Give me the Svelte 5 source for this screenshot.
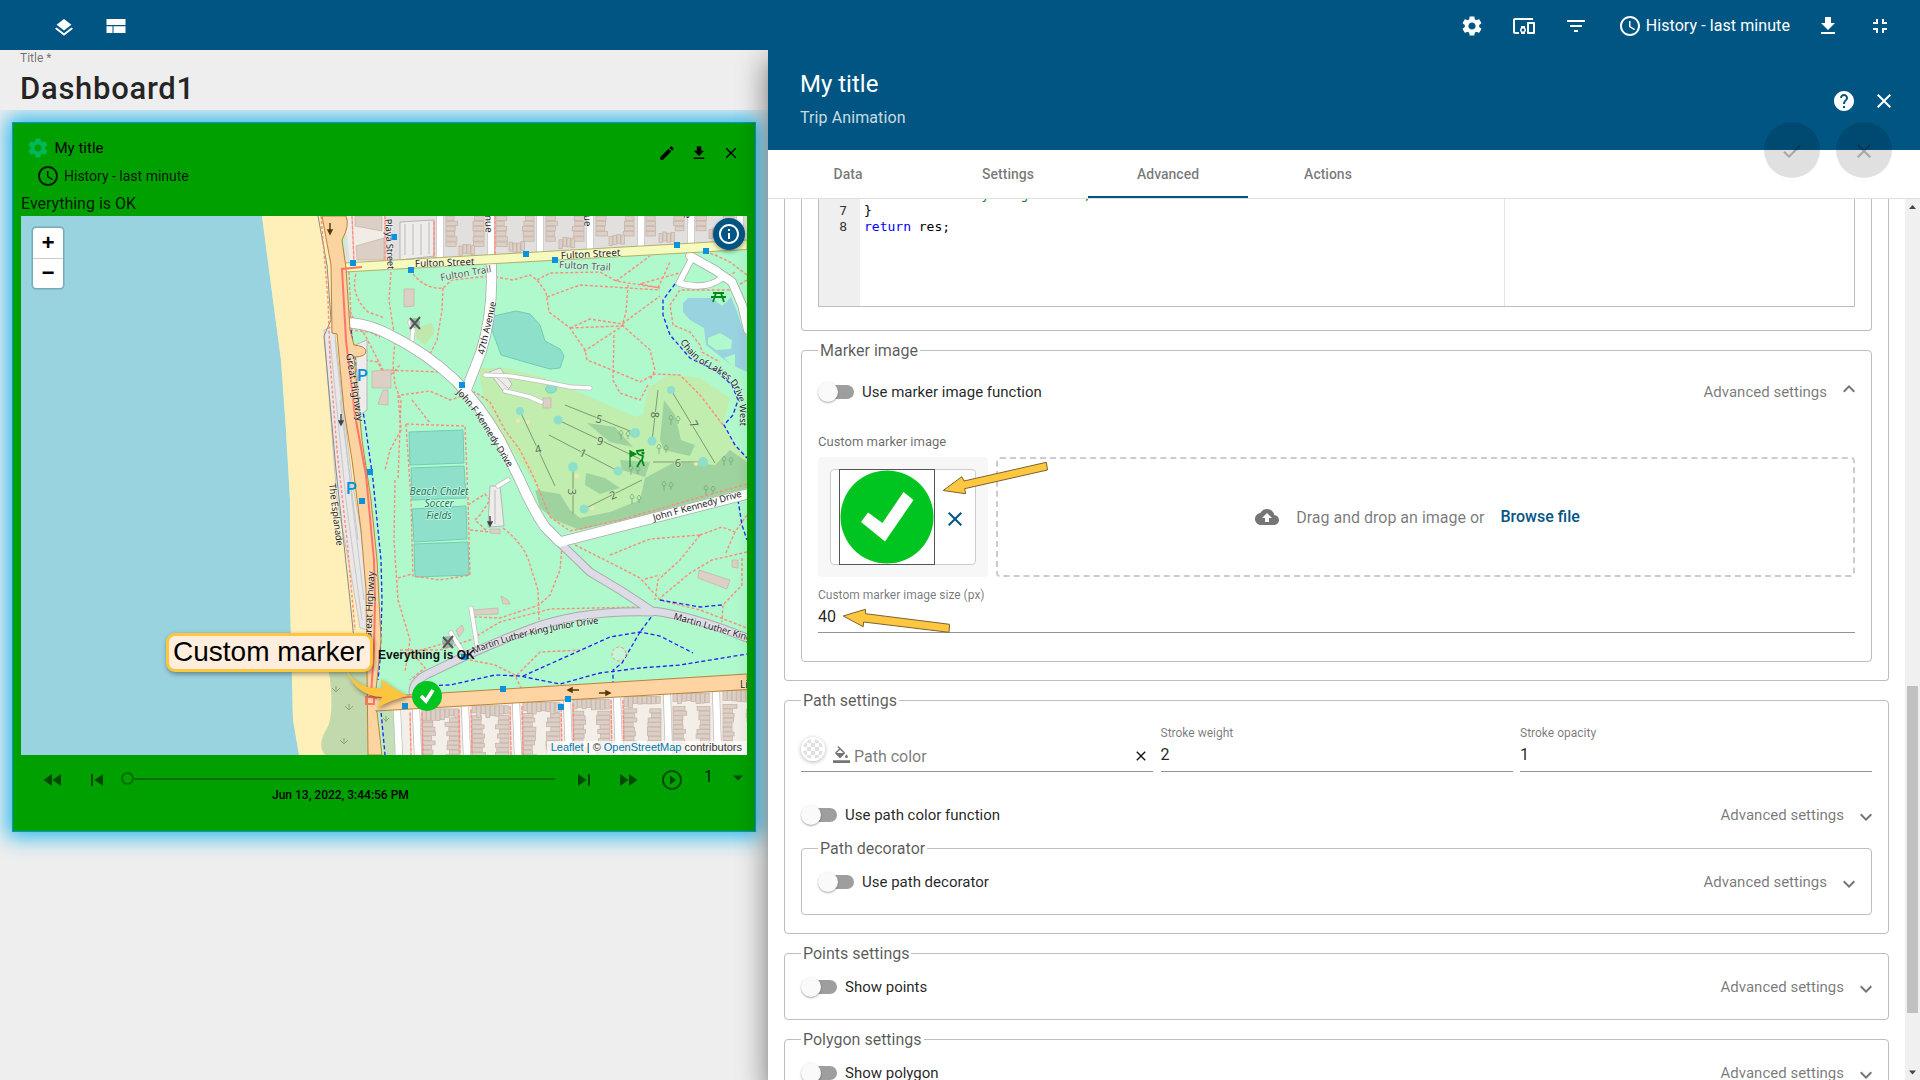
<script>
  const icons = {
    layers: 'M12 16.5l-7.4-5.7L12 5l7.4 5.8zM12 19.2l7.4-5.8 1.6 1.3-9 7-9-7 1.6-1.3z',
    gear: 'M19.14 12.94c.04-.3.06-.61.06-.94 0-.32-.02-.64-.07-.94l2.03-1.58c.18-.14.23-.41.12-.61l-1.92-3.32c-.12-.22-.37-.29-.59-.22l-2.39.96c-.5-.38-1.03-.7-1.62-.94l-.36-2.54c-.04-.24-.24-.41-.48-.41h-3.84c-.24 0-.43.17-.47.41l-.36 2.54c-.59.24-1.13.57-1.62.94l-2.39-.96c-.22-.08-.47 0-.59.22L2.74 8.87c-.12.21-.08.47.12.61l2.03 1.58c-.05.3-.09.63-.09.94s.02.64.07.94l-2.03 1.58c-.18.14-.23.41-.12.61l1.92 3.32c.12.22.37.29.59.22l2.39-.96c.5.38 1.03.7 1.62.94l.36 2.54c.05.24.24.41.48.41h3.84c.24 0 .44-.17.47-.41l.36-2.54c.59-.24 1.13-.56 1.62-.94l2.39.96c.22.08.47 0 .59-.22l1.92-3.32c.12-.22.07-.47-.12-.61l-2.01-1.58zM12 15.6c-1.98 0-3.6-1.62-3.6-3.6s1.62-3.6 3.6-3.6 3.6 1.62 3.6 3.6-1.62 3.6-3.6 3.6z',
    devices: 'M3 6h18V4H3c-1.1 0-2 .9-2 2v12c0 1.1.9 2 2 2h4v-2H3V6zm10 6H9v1.78c-.61.55-1 1.33-1 2.22s.39 1.67 1 2.22V20h4v-1.78c.61-.55 1-1.34 1-2.22s-.39-1.67-1-2.22V12zm-2 5.5c-.83 0-1.5-.67-1.5-1.5s.67-1.5 1.5-1.5 1.5.67 1.5 1.5-.67 1.5-1.5 1.5zM22 8h-6c-.5 0-1 .5-1 1v10c0 .5.5 1 1 1h6c.5 0 1-.5 1-1V9c0-.5-.5-1-1-1zm-1 10h-4v-8h4v8z',
    filter: 'M10 18h4v-2h-4v2zM3 6v2h18V6H3zm3 7h12v-2H6v2z',
    clock: 'M11.99 2C6.47 2 2 6.48 2 12s4.47 10 9.99 10C17.52 22 22 17.52 22 12S17.52 2 11.99 2zM12 20c-4.42 0-8-3.58-8-8s3.58-8 8-8 8 3.58 8 8-3.58 8-8 8zm.5-13H11v6l5.25 3.15.75-1.23-4.5-2.67z',
    download: 'M19 9h-4V3H9v6H5l7 7 7-7zM5 18v2h14v-2H5z',
    exit: 'M5 16h3v3h2v-5H5v2zm3-8H5v2h5V5H8v3zm6 11h2v-3h3v-2h-5v5zm2-11V5h-2v5h5V8h-3z',
    help: 'M12 2C6.48 2 2 6.48 2 12s4.48 10 10 10 10-4.48 10-10S17.52 2 12 2zm1 17h-2v-2h2v2zm2.07-7.75l-.9.92C13.45 12.9 13 13.5 13 15h-2v-.5c0-1.1.45-2.1 1.17-2.83l1.24-1.26c.37-.36.59-.86.59-1.41 0-1.1-.9-2-2-2s-2 .9-2 2H8c0-2.21 1.79-4 4-4s4 1.79 4 4c0 .88-.36 1.68-.93 2.25z',
    close: 'M19 6.41L17.59 5 12 10.59 6.41 5 5 6.41 10.59 12 5 17.59 6.41 19 12 13.41 17.59 19 19 17.59 13.41 12z',
    check: 'M9 16.17L4.83 12l-1.42 1.41L9 19 21 7l-1.41-1.41z',
    edit: 'M3 17.25V21h3.75L17.81 9.94l-3.75-3.75L3 17.25zM20.71 7.04c.39-.39.39-1.02 0-1.41l-2.34-2.34c-.39-.39-1.02-.39-1.41 0l-1.83 1.83 3.75 3.75 1.83-1.83z',
    rewind: 'M11 18V6l-8.5 6 8.5 6zm.5-6l8.5 6V6l-8.5 6z',
    forward: 'M4 18l8.5-6L4 6v12zm9-12v12l8.5-6L13 6z',
    prev: 'M6 6h2v12H6zm3.5 6l8.5 6V6z',
    next: 'M6 18l8.5-6L6 6v12zM16 6v12h2V6h-2z',
    play: 'M10 16.5l6-4.5-6-4.5v9zM12 2C6.48 2 2 6.48 2 12s4.48 10 10 10 10-4.48 10-10S17.52 2 12 2zm0 18c-4.41 0-8-3.59-8-8s3.59-8 8-8 8 3.59 8 8-3.59 8-8 8z',
    caret: 'M7 9.5l5 5 5-5z',
    info: 'M11 7h2v2h-2zm0 4h2v6h-2zm1-9C6.48 2 2 6.48 2 12s4.48 10 10 10 10-4.48 10-10S17.52 2 12 2zm0 18c-4.41 0-8-3.59-8-8s3.59-8 8-8 8 3.59 8 8-3.59 8-8 8z',
    cloud: 'M19.35 10.04C18.67 6.59 15.64 4 12 4 9.11 4 6.6 5.64 5.35 8.04 2.34 8.36 0 10.91 0 14c0 3.31 2.69 6 6 6h13c2.76 0 5-2.24 5-5 0-2.64-2.05-4.78-4.65-4.96zM14 13v4h-4v-4H7l5-5 5 5h-3z',
    fill: 'M16.56 8.94L7.62 0 6.21 1.41l2.38 2.38-5.15 5.15c-.59.59-.59 1.54 0 2.12l5.5 5.5c.29.29.68.44 1.06.44s.77-.15 1.06-.44l5.5-5.5c.59-.58.59-1.53 0-2.12zM5.21 10L10 5.21 14.79 10H5.21zM19 11.5s-2 2.17-2 3.5c0 1.1.9 2 2 2s2-.9 2-2c0-1.33-2-3.5-2-3.5zM0 20h24v4H0v-4z',
    chevron: 'M7.41 8.59L12 13.17l4.59-4.58L18 10l-6 6-6-6z'
  };
  const tabs = ['Data', 'Settings', 'Advanced', 'Actions'];

  // Rows of houses on either side of the avenues.
  let seed = 7;
  const rnd = () => (seed = (seed * 16807) % 2147483647) / 2147483647;
  const north = [];
  for (const x of [446, 496, 546, 596, 646, 696]) {
    for (const side of [0, 1]) {
      const bottom = 264 - (x - 380) * 0.066 - side * 2 - 10;
      for (let y = 216; y < bottom - 4; y += 5.2) {
        const w = 8 + rnd() * 4;
        north.push([side ? x + 38 - w : x, y, w, 4.4]);
      }
    }
    for (let i = 0; i < 4; i++) north.push([x + 13 + i * 4, 244 - (x - 440) * 0.065 + rnd() * 3, 3.6, 9]);
  }
  const south = [];
  for (const x of [422, 472, 523, 573, 624, 673, 723]) {
    for (const side of [0, 1]) {
      for (let y = 718 - (x - 420) * 0.045; y < 755; y += 4.6) {
        const w = 9 + rnd() * 5;
        south.push([side ? x + 37 - w : x, y, w, 4]);
      }
    }
    for (let i = 0; i < 8; i++) south.push([x + i * 4.6, 709 - (x - 420) * 0.062, 4, 7 + rnd() * 5]);
  }
  const stops = [[353, 263], [394, 237], [411, 270], [526, 254], [555, 260], [677, 245], [706, 251], [462, 385], [370, 472], [362, 501], [464, 657], [503, 689], [568, 699], [561, 707], [405, 706]];
  const streetsN = [440, 491, 540, 590, 641, 691, 740];
  const streetsS = [397, 416, 465, 516, 567, 617, 667, 716];
  const greens = [[520, 411, 4], [558, 420, 4.5], [573, 467, 5], [618, 471, 4.5], [635, 433, 5], [652, 441, 4.5], [671, 390, 4], [703, 462, 5], [584, 509, 4.5]];
  const holes = [[520, 411, 555, 486], [558, 420, 640, 459], [549, 435, 618, 471], [565, 405, 635, 433], [658, 390, 652, 441], [671, 390, 715, 463], [653, 462, 703, 462], [573, 467, 573, 514], [584, 509, 642, 480]];
  const numbers = [['4', 538, 449, -15], ['9', 600, 441, 15], ['1', 583, 453, 25], ['5', 599, 419, 15], ['8', 655, 415, 90], ['7', 694, 424, 60], ['6', 678, 463, 0], ['3', 572, 492, 90], ['2', 613, 495, -25]];
  const trees = [[674, 420], [662, 449], [634, 470], [667, 486], [709, 490], [727, 461], [624, 435], [635, 499]];
  const jfk = 'M352 323Q372 325 390 335 425 352 455 380 480 405 500 440L519 478Q532 508 545 527L560 542 747 494M491 262Q494 310 481 352L467 388';
  const paths = [
    'M349 272 352 340 350 310M356 274Q350 295 368 312L385 318M391 272 389 300 395 340 393 365 395 385 401 400 398 480M410 270Q424 290 443 288L452 280 490 276 513 280 530 275 537 280 546 292 549 312 570 328 585 350 587 360 612 370 640 382 655 374 680 375 700 395 723 425',
    'M443 288 442 310 437 340 430 354M352 316 365 335 383 370 440 372 420 350M350 358 378 362 386 380 400 365',
    'M537 280 550 273 600 272 616 281 660 288 640 284 690 270M616 281 650 256M658 288 670 262M547 297 580 285 660 290M628 285 626 312 622 326 570 328M570 328 590 319 622 324 660 296M624 325 583 352M622 325 650 350 655 370 650 380M614 335 613 380 620 393 640 400 648 385',
    'M350 330 370 332 380 337M401 395 430 391 450 400 475 392 490 402 505 430 520 450 535 480 550 517 570 531 620 520 747 484',
    'M406 424 465 426 468 500 470 575 440 580 413 576 411 500ZM398 395 401 430 390 450 385 470M412 400 430 423M395 480 394 540 398 600 410 640 405 672M398 578 412 574',
    'M468 505 485 494 490 500 480 515 475 520 486 530M470 530 490 532M503 528Q525 545 530 565L538 590 539 620M400 650 440 650 470 640 500 622 550 609 640 607M562 546 560 570 550 595 539 605 500 618 475 617',
    'M575 545 605 560 640 578 660 600 700 610 747 628M610 555 650 539 700 535M700 535 680 560 658 580 655 600M700 535 722 527 735 532 747 515M735 532 725 555M747 552 712 560 690 573 660 598M742 558 742 585 723 605 722 622M645 579 660 575',
    'M470 660 495 665 515 675 522 690 519 700M517 675 540 652 583 650M414 655 425 668 410 680M455 640 405 655'
  ];
  const eastPaths = 'M747 275 730 262 715 255 700 250M747 280 730 290 700 290 680 290 670 305 673 325 690 332 700 345 702 352 720 362M735 272 722 280';
  const bluePaths = [
    'M675 284 663 300 663 315 670 335 690 358 715 370 732 385 738 400 733 415 724 425 735 445 747 458',
    'M351 330 357 370 362 405 366 430 373 480 381 560 382 600 380 660 378 680',
    'M380 700 385 755M413 686 450 685 495 675 520 676 560 684 600 673 640 668 680 665 747 654M523 676 570 655 610 637 640 632 660 636 693 653M640 632 622 663 613 670 613 684M655 612 640 632M660 600 700 607 722 605M738 500 742 525 747 540'
  ];
</script>

{#snippet icon(name, size = 24)}
  <svg class="icon" width={size} height={size} viewBox="0 0 24 24"><path d={icons[name]} /></svg>
{/snippet}

{#snippet toggleRow(label, open = false)}
  <div class="toggle-row">
    <span class="toggle"><i></i></span>
    <span class="toggle-label">{label}</span>
    <span class="adv">Advanced settings</span>
    <span class="chev" class:open>{@render icon('chevron', 24)}</span>
  </div>
{/snippet}

<div class="app">
  <header class="topbar">
    <div class="left-tools">
      {@render icon('layers')}
      <svg class="icon" width="24" height="24" viewBox="0 0 24 24"><path d="M2.500 5H21.500v6H2.500zM2.500 12.300h6V19h-6zM9.500 12.300h12V19h-12z" /></svg>
    </div>
    <div class="right-tools">
      {@render icon('gear')}
      {@render icon('devices')}
      {@render icon('filter')}
      <span class="history">{@render icon('clock')}<span>History - last minute</span></span>
      {@render icon('download')}
      {@render icon('exit')}
    </div>
  </header>

  <div class="body">
    <main class="dashboard">
      <div class="dash-title">
        <small>Title *</small>
        <strong>Dashboard1</strong>
      </div>
      <div class="canvas">
        <section class="widget">
          <div class="w-head">
            <div>
              <div class="w-title">{@render icon('gear', 24)}<span>My title</span></div>
              <div class="w-time">{@render icon('clock', 24)}<span>History - last minute</span></div>
            </div>
            <div class="w-actions">
              {@render icon('edit', 18)}{@render icon('download', 18)}{@render icon('close', 18)}
            </div>
          </div>
          <div class="status">Everything is OK</div>
          <div class="map">
            <svg width="726" height="539" viewBox="21 216 726 539">
              <defs>
                <path id="jfk1" d="M456 393Q470 406 484 429T522 490" />
                <path id="mlk1" d="M474 654Q530 629 640 619" />
                <path id="lakes" d="M680 342Q693 362 712 370T737 395 737 450" />
              </defs>
              <rect x="21" y="216" width="726" height="539" fill="#aff9cc" />
              <path d="M21 216H262L273 300 281 360 286 430 290 500 290 600 293 720 299 755H21Z" fill="#99d3df" />
              <path d="M262 216H330L346 400 372 600V755H299L293 720 290 600 290 500 286 430 281 360 273 300Z" fill="#fff0ba" />
              <path d="M326 660H372V755H325Q317 745 326 730 333 720 331 690 329 668 326 660Z" fill="#c2d8ad" />
              <path d="M345 216H747V244L345 268Z" fill="#e2dfdf" />
              <path d="M345 216H384V262L350 264Z" fill="#f2ece6" />
              <path d="M392 705 747 688V755H397Z" fill="#f3eee8" />
              <path d="M378 705H392L397 755H384Z" fill="#c2e0b8" />
              <path d="M478 368 505 368 545 378 585 395 636 417 643 414 648 388 670 374 700 378 730 398 723 425 735 445 747 458V488L620 520 575 531 553 520 530 476 500 432 484 400Z" fill="#c1edae" />
              <path d="M664 400 675 415 681 440 695 445 690 456 664 450 660 440ZM587 423 615 427 633 447 610 442ZM645 478 675 462 715 465 730 450 747 462V488L640 516 580 530 555 520 540 508 535 490 560 494 570 510 580 518 610 512 640 500ZM586 473 605 478 620 488 600 494 585 485ZM620 460 650 462 645 477 622 470Z" fill="#9ed29e" />
              <path d="M494 316 516 311 530 314 540 325 545 341 560 349 564 356 560 368 550 369 525 362 501 355 492 330Z" fill="#8fe0ca" stroke="#6fcdb4" />
              <path d="M683 303 688 298 712 298 722 306 731 297 737 312 743 330 747 336V372L730 364 706 345 704 328 690 320 683 312Z" fill="#99d3df" />
              <path d="M708 338 720 333 732 340 731 349 716 350 708 344ZM724 358 735 354 735 368Z" fill="#aff9cc" />
              <g fill="#8fe0ca" stroke="#6fcdb4">
                <path d="M409 432 463 430 464 463 410 465ZM411 468 464 466 466 498 412 500ZM412 509 466 506 467 539 414 542ZM414 544 468 542 469 575 415 577Z" />
              </g>
              <ellipse cx="551" cy="389" rx="5.500" ry="4.200" fill="#8fe0ca" stroke="#6fcdb4" stroke-width=".7" />
              <path d="M324 330 334 326 352 480 366 560 368 630 360 628 352 580 337 500Z" fill="#e9e7e7" stroke="#b5b5b5" stroke-width=".7" />
              <path d="M330 340 346 500 362 620M335 340 352 500 364 600M340 400 358 540" stroke="#c8c8c8" fill="none" />
              <path d="M318 216 327 265 331 320 324 336 336 470 350 600 354 640" stroke="#888" fill="none" stroke-width="1" />
              <path d="M321 216 328 300 330 360 337 450 347 540 355 630" class="foot" />

              <g class="foot">{#each paths as d}<path {d} />{/each}<path d={eastPaths} /></g>
              <g class="cycle">{#each bluePaths as d}<path {d} />{/each}</g>

              <g fill="#dccfc6" stroke="#c4b1a5" stroke-width=".7">
                <path d="M355 216 382 216V231L355 226ZM356 246 384 238V260L357 260ZM404 289 414 289V306L404 307ZM372 371 391 370V388L372 388ZM383 390 388 390V405L378 404ZM699 570 730 580 727 589 698 578ZM732 560 738 560V568L732 567ZM501 596 508 600 510 604 503 604ZM473 610 498 608V614L473 615ZM543 398 551 398V408L543 408ZM490 529 500 529V534L490 533ZM456 630 462 625 464 630 459 637Z" />
                {#each north as [x, y, w, h]}<rect {x} {y} width={w} height={h} />{/each}
                {#each south as [x, y, w, h]}<rect {x} {y} width={w} height={h} />{/each}
              </g>
              <path d="M400 222 434 220V256L400 260ZM489 372 500 368 512 384 505 394ZM490 486 500 486 504 526 488 527ZM355 345 367 340V410L360 415Z" fill="#eeeceb" stroke="#aaa" stroke-width=".8" />
              <path d="M405 224V255M413 224V255M421 224V255M429 222V254M495 490V524M495 376 508 388" stroke="#bbb" fill="none" />

              <g fill="none" stroke-linejoin="round" stroke-linecap="round">
                <g stroke="#bbb" stroke-width="8">
                  {#each streetsN as x}<path d={`M${x} 216V${262 - (x - 380) * 0.064}`} />{/each}
                  {#each streetsS as x}<path d={`M${x} ${712 - (x - 400) * 0.062}L${x + 2} 756`} />{/each}
                </g>
                <g stroke="#fff" stroke-width="6.6">
                  {#each streetsN as x}<path d={`M${x} 216V${264 - (x - 380) * 0.064}`} />{/each}
                  {#each streetsS as x}<path d={`M${x} ${710 - (x - 400) * 0.062}L${x + 2} 756`} />{/each}
                </g>
                <g class="foot">
                  <path d="M352 216 354 262M434 222V258M495 216V256M385 216V262" />
                  {#each streetsS.slice(1, 6) as x}<path d={`M${x - 6} ${714 - (x - 400) * 0.062}L${x - 5} 755M${x + 6} ${714 - (x - 400) * 0.062}L${x + 7} 755`} />{/each}
                </g>
                <g stroke="#c0c0c0" stroke-width="5"><path d="M485 375 510 376 540 381 570 387 590 388M505 391 530 397 541 402M412 340 413 330 410 322M471 608 477 645M451 633 463 652M508 480 498 486" /></g>
                <g stroke="#fff" stroke-width="3.6"><path d="M485 375 510 376 540 381 570 387 590 388M505 391 530 397 541 402M412 340 413 330 410 322M471 608 477 645M451 633 463 652M508 480 498 486" /></g>
                <g stroke="#aaa">
                  <path stroke-width="11" d={jfk} />
                  <path stroke-width="9" d="M562 545 590 572 620 590 652 611Q690 615 747 638M652 612Q580 610 530 629T432 672Q413 680 413 692" />
                  <path stroke-width="9.500" d="M690 256 715 270 732 282 742 305 748 330" />
                  <path stroke-width="7" d="M691 260 679 283Q705 291 722 278" />
                </g>
                <g stroke="#dddbe6" stroke-width="7"><path d="M562 545 590 572 620 590 652 611Q690 615 747 638M652 612Q580 610 530 629T432 672Q413 680 413 692" /></g>
                <g stroke="#fff">
                  <path stroke-width="9.500" d={jfk} />
                  <path stroke-width="8" d="M690 256 715 270 732 282 742 305 748 330" />
                  <path stroke-width="5.500" d="M691 260 679 283Q705 291 722 278" />
                </g>
              </g>

              <path d="M344 263 747 240V249.500L344 272Z" fill="#f7fabf" stroke="#a4a04c" stroke-width=".8" />
              <path d="M322 216 331 265 332 333 337 334 344 410 352 460 361 530 366 590 368 755H382L377 712 376 690 381 640 377 560 371 500 362 440 354 357Q366 357 366 351 365 346 354 345L350 330 346 268 342 240Q350 225 346 216Z" fill="#fcd4a1" stroke="#b98437" />
              <path d="M376 697 747 674V689.500L376 711Z" fill="#fed5a2" stroke="#b98437" />
              <path d="M369 699H378V710H369Z" fill="#fcd4a1" />
              <path d="M362 267 342 269 346 340 355 415 366 475 374 560 375 600 374 650 371 695V697H430M366 697H374V704H366Z" fill="none" stroke="#ff7468" stroke-width="2" />

              <g stroke="#7d9a76" stroke-width="1">{#each holes as [a, b, c, d]}<line x1={a} y1={b} x2={c} y2={d} />{/each}</g>
              <g fill="#8fe0ca">{#each greens as [x, y, r]}<circle cx={x} cy={y} {r} />{/each}</g>
              <g fill="#f5e3b5"><circle cx="518" cy="421" r="2" /><circle cx="528" cy="422" r="2" /><circle cx="577" cy="476" r="2" /><circle cx="696" cy="464" r="2" /><circle cx="592" cy="508" r="2" /></g>
              <g class="num">{#each numbers as [n, x, y, a]}<text transform={`translate(${x} ${y}) rotate(${a})`} y="4">{n}</text>{/each}</g>
              <g fill="none" stroke="#74aa78" opacity=".8">{#each trees as [x, y]}<path d={`M${x - 3} ${y + 5}V${y - 1}M${x - 3} ${y - 5}q-4 4 0 5 4-1 0-5M${x + 4} ${y + 4}V${y}M${x + 4} ${y - 4}q-4 4 0 5 4-1 0-5`} />{/each}</g>
              <path d="M415 328 432 323 435 332 425 345 416 338Z" fill="#c1e8ac" />
              <g fill="#888" opacity=".55"><circle cx="415" cy="323" r="5" /><circle cx="448" cy="642" r="6" /></g>
              <g stroke="#555" stroke-width="2" fill="none"><path d="M410 318 420 329M420 317 410 329M443 637 453 648M453 636 443 648" /></g>
              <g fill="none" stroke="#008a1c" stroke-width="1.8"><path d="M713 293H724M711 297H726M716 293 713 302M721 293 724 302" /></g>
              <path d="M630 450V467M630 451 636 454 630 457" fill="#008a1c" stroke="#008a1c" stroke-width="1.200" />
              <path d="M638 454 643 456 642 460 644 466M641 460 637 467M638 454 637 451 644 450" fill="none" stroke="#008a1c" stroke-width="1.8" />
              <circle cx="643" cy="453" r="1.6" fill="#008a1c" />
              <g stroke="#8ba877" fill="none"><path d="M336 686V692M332 688 336 692 340 688M349 704V710M345 706 349 710 353 706M344 738V744M340 740 344 744 348 740M386 716V722M383 718 386 721 389 718" /></g>
              <g stroke="#523509" stroke-width="1.4" fill="#523509">
                <path d="M330 223V234M328 230H332L330 234Z" /><path d="M341 414V425M339 421H343L341 425Z" stroke="#444" />
                <path d="M490 516V526M488 522H492L490 526Z" stroke="#444" /><path d="M568 690H579M572 688V692L568 690ZM599 693H610M606 691V695L610 693Z" />
              </g>

              <g fill="#0a92dd">{#each stops as [x, y]}<rect x={x - 3} y={y - 3} width="6" height="6" />{/each}</g>
              <g class="parking"><text x="357" y="381">P</text><text x="346" y="494">P</text></g>

              <g class="road">
                <text x="415" y="267" transform="rotate(-2 416 266)">Fulton Street</text>
                <text x="561" y="259" transform="rotate(-3 561 258)">Fulton Street</text>
                <text x="441" y="281" class="trail" transform="rotate(-10 441 281)">Fulton Trail</text>
                <text x="559" y="268" class="trail" transform="rotate(3 559 269)">Fulton Trail</text>
                <text transform="translate(385 219) rotate(87)" class="narrow">Playa Street</text>
                <text transform="translate(485 215) rotate(88)">nue</text>
                <text transform="translate(584 215) rotate(88)">ue</text>
                <text transform="translate(684 213) rotate(88)">e</text>
                <text class="narrow"><textPath href="#jfk1">John F Kennedy Drive</textPath></text>
                <text class="narrow long"><textPath href="#mlk1">Martin Luther King Junior Drive</textPath></text>
                <text class="narrow"><textPath href="#lakes">Chain of Lakes Drive West</textPath></text>
                <text class="narrow" transform="translate(654 521) rotate(-15.500)">John F Kennedy Drive</text>
                <text class="narrow" transform="translate(484 355) rotate(-77)">47th Avenue</text>
                <text class="narrow" transform="translate(673 619) rotate(16)">Martin Luther King</text>
                <text transform="translate(346 354) rotate(81)">Great Highway</text>
                <text transform="translate(371 640) rotate(-87)">Great Highway</text>
                <text class="narrow" transform="translate(329 484) rotate(83)">The Esplanade</text>
                <text x="740" y="688">Li</text>
              </g>
              <g class="field"><text x="439" y="495">Beach Chalet</text><text x="439" y="507">Soccer</text><text x="439" y="519">Fields</text></g>
              <circle cx="619" cy="654" r="7" fill="#c3f5d6" stroke="#ff8c7a" stroke-dasharray="3 2" />
              <text class="tip" x="378" y="659">Everything is OK</text>
              <circle cx="427" cy="696" r="15" fill="#00c520" />
              <path d="M421 696 426 701 433 690" fill="none" stroke="#fff" stroke-width="3.8" />
            </svg>
            <div class="zoomctl"><b>+</b><b>−</b></div>
            <div class="infobtn">{@render icon('info', 24)}</div>
            <div class="attrib"><a>Leaflet</a> | © <a>OpenStreetMap</a> contributors</div>
          </div>
          <div class="player">
            <div class="controls">
              {@render icon('rewind', 24)}
              {@render icon('prev', 24)}
              <div class="slider"><i></i><u></u></div>
              {@render icon('next', 24)}
              {@render icon('forward', 24)}
              {@render icon('play', 24)}
              <span class="speed">1</span>
              {@render icon('caret', 24)}
            </div>
            <div class="stamp">Jun 13, 2022, 3:44:56 PM</div>
          </div>
        </section>
      </div>
      <div class="callout">Custom marker</div>
      <svg class="callout-arrow" width="70" height="50" viewBox="344 668 70 50">
        <path d="M347 672Q360 690 382 688L381 679Q396 690 408 696 393 699 377 708L382 697Q357 696 347 672Z" />
      </svg>
    </main>

    <aside class="panel">
      <div class="p-head">
        <div>
          <div class="p-title">My title</div>
          <div class="p-sub">Trip Animation</div>
        </div>
        <div class="p-icons">{@render icon('help')}{@render icon('close')}</div>
        <div class="fabs">
          <span>{@render icon('check')}</span>
          <span>{@render icon('close')}</span>
        </div>
      </div>
      <nav>
        {#each tabs as t}<span class:active={t === 'Advanced'}>{t}</span>{/each}
      </nav>
      <div class="scroll">
        <div class="content">
          <div class="group cut outer">
            <div class="group cut first">
              <div class="editor">
                <div class="gutter"><span>6</span><span>7</span><span>8</span></div>
                <pre><span class="str">    res = "Everything is OK";</span>
{'}'}
<span class="kw">return</span> res;</pre>
              </div>
            </div>
            <div class="group marker">
              <div class="legend">Marker image</div>
              {@render toggleRow('Use marker image function', true)}
              <div class="img-label">Custom marker image</div>
              <div class="upload">
                <div class="thumbbox">
                  <div class="thumb">
                    <svg width="96" height="96" viewBox="0 0 96 96"><rect x=".5" y=".5" width="95" height="95" fill="#fff" stroke="#555" /><circle cx="48" cy="48" r="46.500" fill="#00c520" /><path d="M22 53 29 43.500 43.500 54 64.500 23 74.500 31 46 72.500Z" fill="#fff" /></svg>
                    {@render icon('close', 24)}
                  </div>
                </div>
                <div class="drop">{@render icon('cloud', 24)}<span>Drag and drop an image or</span><b>Browse file</b></div>
              </div>
              <div class="field-box size"><small>Custom marker image size (px)</small><span>40</span></div>
            </div>
          </div>

          <div class="group path">
            <div class="legend">Path settings</div>
            <div class="fields">
              <div class="field-box color">
                <i class="swatch"></i>{@render icon('fill', 17)}<em>Path color</em>{@render icon('close', 16)}
              </div>
              <div class="field-box"><small>Stroke weight</small><span>2</span></div>
              <div class="field-box"><small>Stroke opacity</small><span>1</span></div>
            </div>
            {@render toggleRow('Use path color function')}
            <div class="group deco">
              <div class="legend">Path decorator</div>
              {@render toggleRow('Use path decorator')}
            </div>
          </div>

          <div class="group simple">
            <div class="legend">Points settings</div>
            {@render toggleRow('Show points')}
          </div>
          <div class="group simple">
            <div class="legend">Polygon settings</div>
            {@render toggleRow('Show polygon')}
          </div>
        </div>
        <div class="scrollbar">
          <svg width="15" height="15" viewBox="0 0 15 15"><path d="M4 10 7.500 6 11 10Z" /></svg>
          <i></i>
          <svg width="15" height="15" viewBox="0 0 15 15"><path d="M4 5.500 7.500 9.500 11 5.500Z" /></svg>
        </div>
      </div>
      <svg class="pointers" width="240" height="190" viewBox="840 455 240 190">
        <path d="M943.200 490.500 961.800 476.700 964 481 1046.400 462.300 1047.500 470 964.600 488.700 965.700 493.700Z" />
        <path d="M843.200 616 865.400 609.300V613.700L949.600 624.300 949 632.300 863.600 622 863.200 626.700Z" />
      </svg>
    </aside>
  </div>
</div>

<style>
  :global(body) { margin: 0; overflow: hidden; }
  .app { width: 1920px; height: 1080px; display: flex; flex-direction: column; font-family: Roboto, sans-serif; background: #eee; color: rgba(0, 0, 0, .87); overflow: hidden; }
  .app * { box-sizing: border-box; }
  .icon { fill: currentColor; display: block; flex: none; }
  .topbar { height: 50px; flex: none; background: #005582; color: #fff; display: flex; justify-content: space-between; align-items: center; padding: 0 28px 0 52px; }
  .left-tools, .right-tools { display: flex; align-items: center; gap: 28px; padding-top: 1px; }
  .history { display: flex; align-items: center; gap: 4px; font-size: 16px; margin: 0 -2px 0 2px; letter-spacing: .08px; }
  .body { flex: 1; display: flex; min-height: 0; }

  .dashboard { width: 768px; flex: none; display: flex; flex-direction: column; position: relative; }
  .dash-title { height: 60px; flex: none; padding: 2px 20px 0; display: flex; flex-direction: column; }
  .dash-title small { font-size: 12px; line-height: 13px; color: rgba(0, 0, 0, .54); }
  .dash-title strong { font-size: 31px; font-weight: 500; line-height: 36px; margin-top: 6px; letter-spacing: .72px; }
  .canvas { flex: 1; padding: 12px; overflow: hidden; }
  .widget { width: 744px; height: 710px; background: #00a000; border: 1px solid #0095e0; box-shadow: 0 0 20px 5px #28b8ee; padding: 0 8px; color: #000; }
  .w-head { height: 68px; display: flex; justify-content: space-between; padding: 14px 6px 0 4px; }
  .w-title { display: flex; align-items: center; gap: 5px; font-size: 15px; height: 22px; margin-left: .5px; }
  .w-title :global(svg) { color: #00b85a; }
  .w-time { display: flex; align-items: center; gap: 4px; font-size: 14px; color: rgba(0, 0, 0, .87); height: 24px; margin: 5px 0 0 11px; }
  .w-actions { display: flex; gap: 14px; padding: 7px 1px 0 0; }
  .status { height: 25px; font-size: 16px; line-height: 26px; color: rgba(0, 0, 0, .87); }
  .map { width: 726px; height: 539px; position: relative; overflow: hidden; }
  .map > svg { display: block; }
  .foot, .foot :global(path) { fill: none; stroke: #ff8b7c; stroke-width: 1.4; stroke-dasharray: 3 2; }
  .cycle, .cycle :global(path) { fill: none; stroke: #2222f2; stroke-width: 1.3; stroke-dasharray: 4 2.500; }
  .road text { font-family: 'Noto Sans', sans-serif; font-size: 9.900px; fill: #1c1c1c; paint-order: stroke; stroke: rgba(255, 255, 255, .55); stroke-width: 1.200px; }
  .road .narrow { font-size: 9.400px; letter-spacing: -.12px; }
  .road .long { letter-spacing: -.28px; }
  .road .trail { fill: #555; }
  .num text { font-family: 'Noto Sans', sans-serif; font-size: 11px; fill: #5b6b57; text-anchor: middle; paint-order: stroke; stroke: #c1edae; stroke-width: 2px; }
  .parking text { font: 500 17px Roboto, sans-serif; fill: #0092da; }
  .field text { font: italic 10.200px 'Noto Sans', sans-serif; fill: #0a7d52; text-anchor: middle; paint-order: stroke; stroke: rgba(255, 255, 255, .6); stroke-width: 1.500px; }
  .tip { font: bold 12px 'Liberation Sans', sans-serif; fill: #111; }
  .zoomctl { position: absolute; left: 11px; top: 11px; width: 32px; border-radius: 4px; background: #fff; border: 1px solid #76a9b5; box-shadow: 0 0 0 .5px #76a9b5; }
  .zoomctl b { display: block; height: 30px; font: bold 22px/33px 'Liberation Mono', monospace; text-align: center; }
  .zoomctl b + b { border-top: 1px solid #ccc; line-height: 31px; }
  .infobtn { position: absolute; right: 2px; top: 2px; width: 32px; height: 32px; border-radius: 50%; background: #005582; color: #fff; display: grid; place-items: center; box-shadow: 0 2px 4px rgba(0, 0, 0, .35); }
  .attrib { position: absolute; right: 0; bottom: 0; height: 14px; padding: 0 5px 0 4px; background: rgba(255, 255, 255, .75); font: 11px/13px 'Liberation Sans', sans-serif; color: #333; white-space: nowrap; }
  .attrib a { color: #0078a8; }
  .controls { display: flex; align-items: center; height: 46px; padding-top: 3px; color: rgba(0, 0, 0, .54); }
  .controls :global(.icon) { margin-left: 20px; }
  .slider { width: 434px; flex: none; display: flex; align-items: center; margin: -2px 0 0 12px; }
  .slider i { width: 13px; height: 13px; border: 2px solid rgba(0, 0, 0, .3); border-radius: 50%; }
  .slider u { flex: 1; height: 2px; background: rgba(0, 0, 0, .3); }
  .controls .slider + :global(.icon) { margin-left: 17px; }
  .speed { width: 10px; flex: none; margin: -7px 0 0 20px; color: rgba(0, 0, 0, .8); }
  .controls .speed + :global(.icon) { margin: -3px 0 0 12px; }
  .stamp { font-size: 12px; font-weight: 500; line-height: 14px; margin: -13px 0 0 251px; }
  .callout { position: absolute; left: 166px; top: 583px; width: 207px; height: 39px; border: 3px solid #fec63c; border-radius: 9px; background: #ffeedd; color: #000; font: 28px/31px 'Liberation Sans', sans-serif; text-indent: 4px; white-space: nowrap; box-shadow: 1px 2px 5px rgba(0, 0, 0, .4); }
  .callout-arrow { position: absolute; left: 344px; top: 618px; fill: #fdc43d; filter: drop-shadow(1px 2px 2px rgba(0, 0, 0, .4)); }

  .panel { flex: 1; background: #fff; display: flex; flex-direction: column; position: relative; min-width: 0; clip-path: inset(0 0 0 -60px); box-shadow: 0 8px 10px -5px rgba(0, 0, 0, .2), 0 16px 24px 2px rgba(0, 0, 0, .3), 0 6px 30px 5px rgba(0, 0, 0, .14); }
  .p-head { height: 100px; flex: none; background: #005582; color: #fff; display: flex; justify-content: space-between; padding: 0 24px 0 32px; position: relative; }
  .p-title { font-size: 24px; line-height: 32px; margin-top: 18px; }
  .p-sub { font-size: 16px; line-height: 20px; margin-top: 8px; letter-spacing: .1px; color: rgba(255, 255, 255, .8); }
  .p-icons { display: flex; gap: 16px; padding-top: 39px; }
  .fabs { position: absolute; right: 28px; bottom: -28px; display: flex; gap: 16px; }
  .fabs span { width: 56px; height: 56px; border-radius: 50%; background: rgba(0, 0, 0, .12); color: rgba(0, 0, 0, .26); display: grid; place-items: center; padding-top: 2px; }
  nav { height: 49px; flex: none; display: flex; border-bottom: 1px solid #dfdfdf; }
  nav span { width: 160px; height: 48px; line-height: 48px; text-align: center; font-size: 14px; font-weight: 500; color: rgba(0, 0, 0, .54); }
  nav .active { border-bottom: 2px solid #005582; }
  .scroll { flex: 1; display: flex; min-height: 0; overflow: hidden; }
  .content { flex: 1; padding: 0 16px; }
  .group { border: 1px solid #bdbdbd; border-radius: 4px; padding: 0 16px; }
  .cut { border-top: 0; border-top-left-radius: 0; border-top-right-radius: 0; }
  .outer { height: 482px; }
  .first { height: 132px; }
  .editor { height: 108px; border: 1px solid #bdbdbd; border-top: 0; display: flex; overflow: hidden; font: 13px/16px 'DejaVu Sans Mono', monospace; color: #000; background: linear-gradient(90deg, transparent 685px, #e6e6e6 685px, #e6e6e6 686px, transparent 686px); }
  .gutter { width: 41px; background: #efefef; color: #333; display: flex; flex-direction: column; align-items: flex-end; padding: 1px 13px 0 0; margin-top: -13px; flex: none; }
  .editor pre { font: inherit; margin: -12px 0 0 4px; }
  .kw { color: #00f; }
  .str { color: #0a7d1b; }
  .marker { margin-top: 19px; height: 312px; }
  .legend { width: fit-content; height: 20px; line-height: 20px; margin: -10px 0; padding: 0 2px; background: #fff; font-size: 16px; color: rgba(0, 0, 0, .66); }
  .toggle-row { display: flex; align-items: center; height: 20px; font-size: 15px; white-space: nowrap; }
  .toggle { width: 36px; height: 14px; border-radius: 7px; background: linear-gradient(90deg, transparent 6px, #9e9e9e 6px); display: flex; align-items: center; }
  .toggle i { width: 20px; height: 20px; border-radius: 50%; background: #fafafa; box-shadow: 0 1px 2px rgba(0, 0, 0, .35); flex: none; }
  .toggle-label { margin-left: 8px; }
  .adv { margin-left: auto; color: rgba(0, 0, 0, .54); }
  .chev { width: 24px; height: 24px; margin: 4px -6px 0 10px; color: rgba(0, 0, 0, .54); }
  .chev.open { transform: rotate(180deg); margin-top: -6px; }
  .marker .toggle-row { margin-top: 31px; }
  .img-label { font-size: 13px; line-height: 16px; margin-top: 32px; color: rgba(0, 0, 0, .6); }
  .upload { display: flex; gap: 8px; height: 120px; margin-top: 7px; }
  .thumbbox { width: 170px; background: #f7f7f7; border-radius: 4px; padding: 12px; }
  .thumb { height: 96px; border: 1px solid #ccc; border-radius: 4px; background: #fff; display: flex; align-items: center; color: #005582; padding-left: 8px; gap: 8px; }
  .thumb :global(.icon) { margin-top: 4px; }
  .drop { flex: 1; border: 2px dashed #ccc; border-radius: 4px; display: flex; align-items: center; justify-content: center; color: rgba(0, 0, 0, .54); font-size: 16px; padding-right: 16px; }
  .drop span { margin: 0 16px 0 17px; }
  .drop b { font-weight: 500; color: #005582; margin-top: -1px; }
  .field-box { border-bottom: 1px solid #949494; display: flex; flex-direction: column; }
  .field-box small { font-size: 12px; line-height: 14px; color: rgba(0, 0, 0, .54); }
  .field-box span { font-size: 16px; line-height: 20px; }
  .size { height: 46px; margin-top: 10px; }
  .field-box.size small { padding-top: 1px; }
  .size span { margin-top: 5px; }
  .path { margin-top: 19px; height: 234px; }
  .fields { display: grid; grid-template-columns: repeat(3, 352px); gap: 7.500px; height: 46px; margin-top: 25px; }
  .fields span { margin-top: 5px; }
  .color { flex-direction: row; align-items: center; color: rgba(0, 0, 0, .54); }
  .color .icon { margin: 12px 0 0 8px; }
  .color em { font-style: normal; font-size: 16px; margin: 15px 0 0 4px; flex: 1; }
  .color :global(.icon:last-child) { margin: 14px 4px 0 0; color: #111; }
  .swatch { width: 24px; height: 24px; border-radius: 50%; border: 2px solid #fff; background: repeating-conic-gradient(#e0e0e0 0 25%, #fff 0 50%) 0 0 / 8px 8px; box-shadow: 0 1px 4px rgba(0, 0, 0, .3); }
  .path > :global(.toggle-row) { margin-top: 33px; }
  .deco { height: 67px; margin-top: 23px; }
  .deco :global(.toggle-row), .simple :global(.toggle-row) { margin-top: 23px; }
  .simple { height: 67px; margin-top: 19px; }
  .scrollbar { width: 15px; background: #f0f0f0; display: flex; flex-direction: column; fill: #444; }
  .scrollbar i { height: 327px; width: 11px; background: #c1c1c1; margin: 472px 2px auto; }
  .pointers { position: absolute; left: 72px; top: 405px; fill: #ffc73f; stroke: #7a6230; stroke-width: 1; }
</style>
